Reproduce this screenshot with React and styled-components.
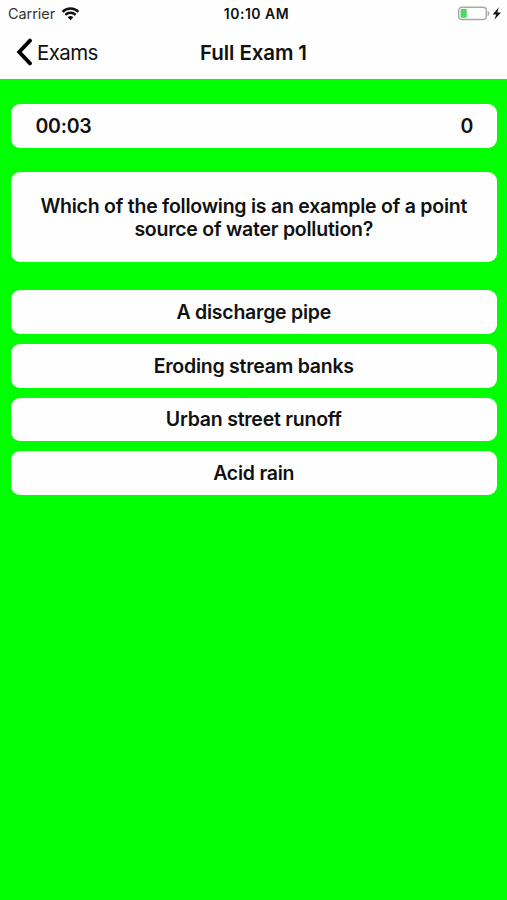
import React from 'react';
import styled, { createGlobalStyle } from 'styled-components';

const GlobalStyle = createGlobalStyle`
  * {
    box-sizing: border-box;
  }

  body {
    margin: 0;
    background-color: #00ff00;
    color: #111;
    font-family: Inter, 'Liberation Sans', sans-serif;
  }
`;

const Screen = styled.div`
  width: 100%;
  min-height: 100vh;
  background-color: #00ff00;
`;

const Header = styled.header`
  height: 79px;
  background-color: #fefefe;
`;

const StatusBar = styled.div`
  height: 27px;
  padding: 0 5px 0 8px;
  display: grid;
  grid-template-columns: 1fr auto 1fr;
  align-items: center;
`;

const Carrier = styled.div`
  display: flex;
  align-items: center;
  gap: 6px;
  font-size: 14.5px;
  letter-spacing: -0.07px;
  color: #333;
`;

const Clock = styled.div`
  padding-left: 3px;
  font-size: 14px;
  font-weight: 600;
  letter-spacing: 0.5px;
`;

const Battery = styled.div`
  display: flex;
  justify-content: flex-end;
`;

const NavBar = styled.nav`
  height: 50px;
  padding: 0 16px;
  display: grid;
  grid-template-columns: 1fr auto 1fr;
  align-items: center;
`;

const BackButton = styled.button`
  display: flex;
  align-items: center;
  gap: 4px;
  padding: 0;
  border: none;
  background: none;
  color: #111;
  font-family: inherit;
  font-size: 20.5px;
  letter-spacing: -0.6px;
  cursor: pointer;
`;

const Title = styled.h1`
  margin: 0;
  font-size: 20.5px;
  font-weight: 600;
  letter-spacing: -0.1px;
`;

const Content = styled.main`
  padding: 24.5px 10px 0 10.5px;
`;

const Card = styled.section`
  display: flex;
  align-items: center;
  justify-content: center;
  border-radius: 9px;
  background-color: #fefefe;
  font-size: 19.5px;
  font-weight: 600;
  letter-spacing: -0.24px;
`;

const ScoreCard = styled(Card)`
  height: 44px;
  padding: 0 24px 0 25px;
  justify-content: space-between;
`;

const QuestionCard = styled(Card)`
  height: 90px;
  margin: 24px 0 28.5px;
  padding: 3px 24px 0;
  line-height: 23px;
  text-align: center;
`;

const Answers = styled.div`
  display: flex;
  flex-direction: column;
  gap: 10px;
`;

const Answer = styled(Card).attrs({ as: 'button' })`
  height: 43.75px;
  padding: 0;
  border: none;
  color: inherit;
  font-family: inherit;
  cursor: pointer;
`;

const answers = [
  { text: 'A discharge pipe' },
  { text: 'Eroding stream banks' },
  { text: 'Urban street runoff' },
  { text: 'Acid rain' },
];

const WifiIcon = () => (
  <svg width="19" height="14" viewBox="0 0 19 14" fill="none" stroke="#111">
    <path d="M1.6 4.8a11.2 11.2 0 0 1 15.8 0" strokeWidth="2.5" />
    <path d="M4.3 7.9a7.4 7.4 0 0 1 10.4 0" strokeWidth="2.3" />
    <path d="M9.5 13.2 6.7 10.3a4 4 0 0 1 5.6 0z" fill="#111" stroke="none" />
  </svg>
);

const BatteryIcon = () => (
  <svg width="45" height="16" viewBox="0 0 45 16">
    <rect x="1.7" y="1.3" width="27.6" height="12.2" rx="3.2" fill="none" stroke="#a9a9a9" strokeWidth="1.4" />
    <rect x="3.6" y="3.1" width="6.2" height="8.6" rx="0.8" fill="#4cd964" />
    <path d="M30.6 4.9c2.4.7 2.4 4.5 0 5.2z" fill="#a9a9a9" />
    <path d="M41.8 1.3 35.7 8.4h3.5L37.4 13.8 44 6.5H40.3z" fill="#111" />
  </svg>
);

const ChevronIcon = () => (
  <svg width="17" height="28" viewBox="0 0 17 28" fill="none" stroke="#000" strokeWidth="3.8">
    <path d="M14 2.6 3.2 14 14 25.4" strokeLinecap="round" />
  </svg>
);

const App = () => {
  return (
    <>
      <GlobalStyle />
      <Screen>
        <Header>
          <StatusBar>
            <Carrier>
              <span>Carrier</span>
              <WifiIcon />
            </Carrier>
            <Clock>10:10 AM</Clock>
            <Battery>
              <BatteryIcon />
            </Battery>
          </StatusBar>
          <NavBar>
            <BackButton>
              <ChevronIcon />
              <span>Exams</span>
            </BackButton>
            <Title>Full Exam 1</Title>
          </NavBar>
        </Header>
        <Content>
          <ScoreCard>
            <span>00:03</span>
            <span>0</span>
          </ScoreCard>
          <QuestionCard>
            Which of the following is an example of a point
            <br />
            source of water pollution?
          </QuestionCard>
          <Answers>
            {answers.map(answer => (
              <Answer key={answer.text}>{answer.text}</Answer>
            ))}
          </Answers>
        </Content>
      </Screen>
    </>
  );
};

export default App;
